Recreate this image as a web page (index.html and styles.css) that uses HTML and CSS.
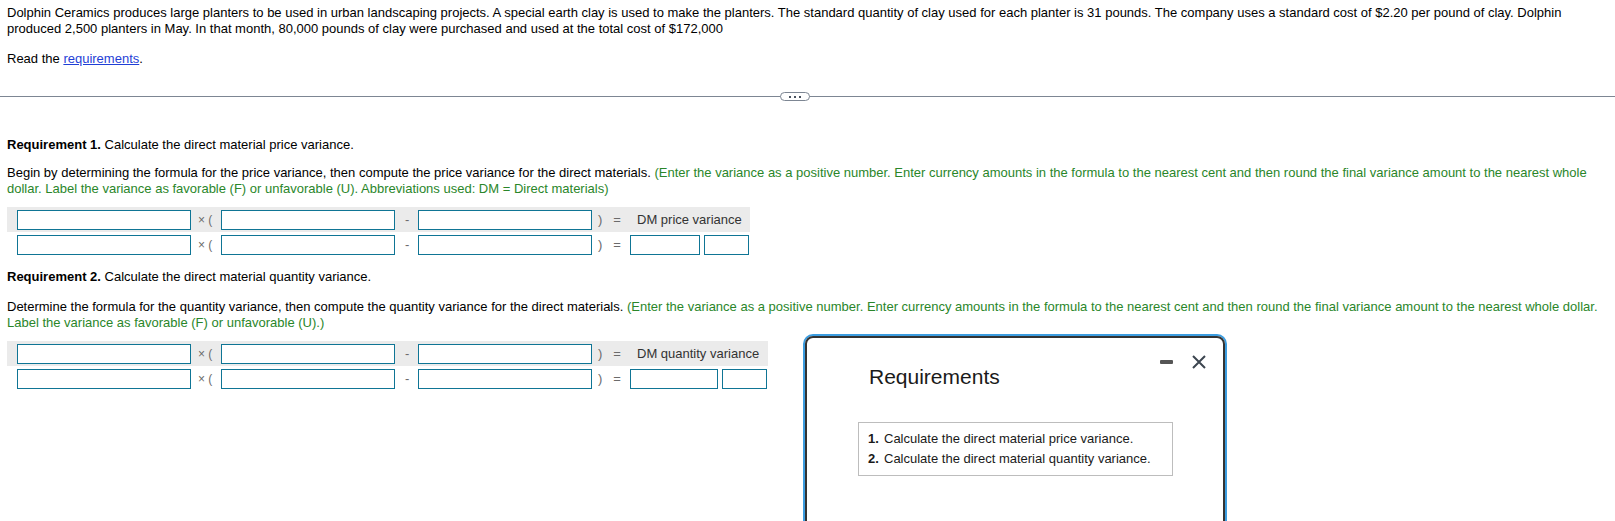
FILE: index.html
```html
<!DOCTYPE html>
<html>
<head>
<meta charset="utf-8">
<link rel="stylesheet" href="styles.css">
</head>
<body>
<div class="problem">
  <p class="intro">Dolphin Ceramics produces large planters to be used in urban landscaping projects. A special earth clay is used to make the planters. The standard quantity of clay used for each planter is 31 pounds. The company uses a standard cost of $2.20 per pound of clay. Dolphin produced 2,500 planters in May. In that month, 80,000 pounds of clay were purchased and used at the total cost of $172,000</p>
  <p class="read">Read the <a href="#" class="link">requirements</a>.</p>
</div>

<div class="divider">
  <span class="pill"><span class="dot"></span><span class="dot"></span><span class="dot"></span></span>
</div>

<div class="section req1">
  <p class="req-title"><b>Requirement 1.</b> Calculate the direct material price variance.</p>
  <p class="instr">Begin by determining the formula for the price variance, then compute the price variance for the direct materials. <span class="green">(Enter the variance as a positive number. Enter currency amounts in the formula to the nearest cent and then round the final variance amount to the nearest whole dollar. Label the variance as favorable (F) or unfavorable (U). Abbreviations used: DM = Direct materials)</span></p>
  <div class="formula f1">
    <div class="frow head">
      <span class="inp"></span><span class="sym times">× (</span><span class="inp"></span><span class="sym minus">-</span><span class="inp"></span><span class="sym eq">)&nbsp;&nbsp;&nbsp;=</span><span class="label">DM price variance</span>
    </div>
    <div class="frow">
      <span class="inp"></span><span class="sym times">× (</span><span class="inp"></span><span class="sym minus">-</span><span class="inp"></span><span class="sym eq">)&nbsp;&nbsp;&nbsp;=</span><span class="inp res1"></span><span class="inp res2"></span>
    </div>
  </div>
</div>

<div class="section req2">
  <p class="req-title"><b>Requirement 2.</b> Calculate the direct material quantity variance.</p>
  <p class="instr">Determine the formula for the quantity variance, then compute the quantity variance for the direct materials. <span class="green">(Enter the variance as a positive number. Enter currency amounts in the formula to the nearest cent and then round the final variance amount to the nearest whole dollar. Label the variance as favorable (F) or unfavorable (U).)</span></p>
  <div class="formula f2">
    <div class="frow head">
      <span class="inp"></span><span class="sym times">× (</span><span class="inp"></span><span class="sym minus">-</span><span class="inp"></span><span class="sym eq">)&nbsp;&nbsp;&nbsp;=</span><span class="label">DM quantity variance</span>
    </div>
    <div class="frow">
      <span class="inp"></span><span class="sym times">× (</span><span class="inp"></span><span class="sym minus">-</span><span class="inp"></span><span class="sym eq">)&nbsp;&nbsp;&nbsp;=</span><span class="inp res1"></span><span class="inp res2"></span>
    </div>
  </div>
</div>

<div class="modal">
  <div class="modal-inner">
    <div class="modal-head">
      <h2 class="modal-title">Requirements</h2>
      <div class="modal-ctrls">
        <span class="minimize"></span>
        <svg class="close" width="14" height="14" viewBox="0 0 14 14"><path d="M1 1 L13 13 M13 1 L1 13" stroke="#3d4650" stroke-width="2" fill="none"/></svg>
      </div>
    </div>
    <ol class="req-list">
      <li><b>1.</b><span>Calculate the direct material price variance.</span></li>
      <li><b>2.</b><span>Calculate the direct material quantity variance.</span></li>
    </ol>
  </div>
</div>
</body>
</html>
```

FILE: styles.css
```css
html, body {
  margin: 0;
  padding: 0;
  background: #fff;
}
body {
  font-family: "Liberation Sans", Arial, sans-serif;
  font-size: 13px;
  color: #000;
  line-height: 16px;
}
p { margin: 0; }

.problem {
  padding: 5px 7px 0;
}
.read {
  margin-top: 14px;
}
.link {
  color: #1f3fd6;
  text-decoration: underline;
}

.divider {
  margin-top: 29px;
  height: 1px;
  background: #7d8693;
  display: flex;
  justify-content: center;
  align-items: center;
}
.pill {
  width: 28px;
  height: 7px;
  border: 1.5px solid #7d8693;
  border-radius: 5px;
  background: #fff;
  display: flex;
  justify-content: center;
  align-items: center;
  gap: 3px;
  position: relative;
  left: -13px;
}
.dot {
  width: 2px;
  height: 2px;
  background: #4a5260;
}

.section {
  padding: 0 7px;
}
.req1 { margin-top: 40px; }
.req2 { margin-top: 12px; }
.req-title b { font-weight: bold; }
.instr { margin-top: 12px; }
.req2 .instr { margin-top: 14px; }
.green { color: #2a862a; }

.formula { margin-top: 10px; }
.req2 .formula { margin-top: 10px; }
.frow {
  display: flex;
  align-items: center;
  height: 25px;
  padding-left: 10px;
  box-sizing: border-box;
}
.f1 .frow { width: 743px; }
.f2 .frow { width: 761px; }
.frow.head { background: #ebebeb; }

.inp {
  display: block;
  box-sizing: border-box;
  width: 174px;
  height: 20px;
  border: 1px solid #0f7595;
  background: #fff;
  flex: none;
}
.sym {
  color: #6b6b6b;
  font-size: 13px;
  flex: none;
  box-sizing: border-box;
}
.times {
  width: 30px;
  padding-left: 7px;
  font-size: 12px;
}
.minus {
  width: 23px;
  padding-left: 10px;
}
.eq {
  width: 38px;
  padding-left: 6px;
}
.label {
  color: #333;
  padding-left: 7px;
  white-space: nowrap;
}
.f1 .res1 { width: 70px; }
.f2 .res1 { width: 88px; }
.res2 { width: 45px; margin-left: 4px; }

.modal {
  position: absolute;
  left: 803px;
  top: 334px;
  width: 424px;
  height: 220px;
  border: 2px solid #3c9de0;
  border-radius: 10px;
  box-sizing: border-box;
}
.modal-inner {
  border: 2px solid #333;
  border-radius: 8px;
  height: 100%;
  box-sizing: border-box;
  background: #fff;
}
.modal-head {
  display: flex;
  justify-content: space-between;
  padding: 17px 17px 0 62px;
}
.modal-title {
  margin: 10px 0 0;
  font-size: 21px;
  font-weight: normal;
  line-height: 24px;
  color: #1a1a1a;
}
.modal-ctrls {
  display: flex;
  align-items: center;
  gap: 19px;
  height: 14px;
}
.minimize {
  width: 13px;
  height: 4px;
  background: #555;
  border-radius: 1px;
}
.req-list {
  list-style: none;
  margin: 33px 0 0 51px;
  padding: 6px 10px 6px 9px;
  width: 315px;
  box-sizing: border-box;
  border: 1px solid #bdbdbd;
  line-height: 20px;
  color: #1a1a1a;
}
.req-list li {
  display: flex;
}
.req-list b {
  width: 16px;
  flex: none;
}
```
